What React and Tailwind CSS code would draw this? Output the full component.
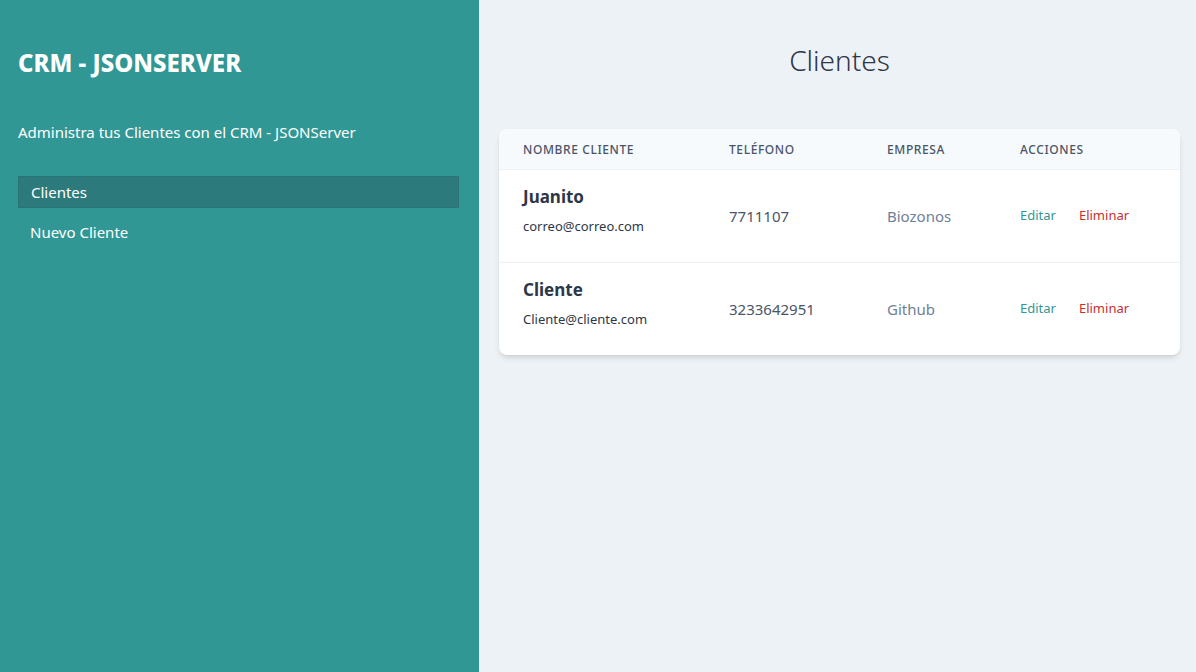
import React from "react";

const clientes = [
  { id: 1, nombre: "Juanito", email: "correo@correo.com", telefono: "7711107", empresa: "Biozonos" },
  { id: 2, nombre: "Cliente", email: "Cliente@cliente.com", telefono: "3233642951", empresa: "Github" },
];

export default function App() {
  return (
    <div
      className="flex min-h-[672px] w-full"
      style={{ fontFamily: '"Noto Sans", "Open Sans", sans-serif' }}
    >
      {/* Sidebar */}
      <aside className="w-[479px] shrink-0 bg-[#319795] pl-[18px] pr-[20px] pt-[51px]">
        <h2 className="text-[24px] font-extrabold text-white leading-none">CRM - JSONSERVER</h2>
        <p className="mt-[46px] text-[15px] text-white">Administra tus Clientes con el CRM - JSONServer</p>
        <nav className="mt-[32px] flex flex-col">
          <a className="block border border-[#2a7371] bg-[#2c7a7b] px-3 py-[4px] text-[15px] text-white">Clientes</a>
          <a className="block px-3 py-[13px] text-[15px] text-white">Nuevo Cliente</a>
        </nav>
      </aside>

      {/* Main */}
      <main className="flex-1 bg-[#edf2f7] pl-5 pr-4 pt-[40px]">
        <h1 className="text-center text-[28px] font-light text-[#2d3748] leading-[40px]">Clientes</h1>

        <div className="mt-[49px] overflow-hidden rounded-lg bg-white shadow-md">
          <table className="w-full table-fixed text-left">
            <thead className="bg-[#f7fafc]">
              <tr className="text-[12px] uppercase tracking-wider text-[#4a5568]">
                <th className="w-[206px] px-6 pt-[12px] pb-[10px] font-medium">Nombre Cliente</th>
                <th className="w-[158px] px-6 pt-[12px] pb-[10px] font-medium">Teléfono</th>
                <th className="w-[133px] px-6 pt-[12px] pb-[10px] font-medium">Empresa</th>
                <th className="px-6 pt-[12px] pb-[10px] font-medium">Acciones</th>
              </tr>
            </thead>
            <tbody>
              {clientes.map((c) => (
                <tr key={c.id} className="border-t border-[#edf2f7]">
                  <td className="px-6 pt-[13px] pb-[26px]">
                    <p className="text-[17px] font-bold text-[#2d3748] leading-[28px]">{c.nombre}</p>
                    <p className="text-[13px] text-[#2d3748] leading-[20px] mt-[5px]">{c.email}</p>
                  </td>
                  <td className="px-6 text-[15px] text-[#4a5568]">{c.telefono}</td>
                  <td className="px-6 text-[15px] text-[#718096]">{c.empresa}</td>
                  <td className="px-6 text-[13px]">
                    <button className="text-[#319795]">Editar</button>
                    <button className="ml-[23px] text-[#c53030]">Eliminar</button>
                  </td>
                </tr>
              ))}
            </tbody>
          </table>
        </div>
      </main>
    </div>
  );
}
